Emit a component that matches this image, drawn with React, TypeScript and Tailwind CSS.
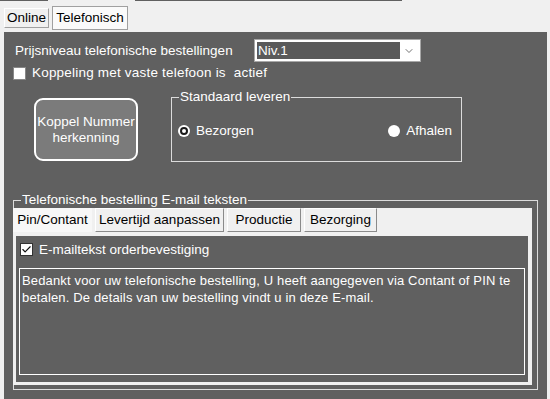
import { Check, ChevronDown } from "lucide-react";

const font = { fontFamily: '"Liberation Sans", Arial, sans-serif' };

const Radio = ({ checked, label }: { checked?: boolean; label: string }) => (
  <div className="flex items-center gap-[6px]">
    <div className="size-[12px] rounded-full bg-white flex items-center justify-center">
      {checked && <div className="size-[8px] rounded-full border-2 border-[#1a1a1a]" />}
    </div>
    <span>{label}</span>
  </div>
);

const Checkbox = ({ checked }: { checked?: boolean }) => (
  <div className="size-[13px] bg-white border border-[#333] flex items-center justify-center">
    {checked && <Check className="size-[11px] text-[#111]" strokeWidth={2.5} />}
  </div>
);

const emailTabs = [
  { label: "Levertijd aanpassen", w: "w-[129px]" },
  { label: "Productie", w: "w-[74px]" },
  { label: "Bezorging", w: "w-[73px]" },
];

export default function App() {
  return (
    <div
      className="w-[550px] h-[399px] bg-[#f0f0f0] flex flex-col overflow-hidden text-[13.5px] leading-[16px]"
      style={font}
    >
      {/* top edge remnant */}
      <div className="flex h-px">
        <div className="w-[48px] bg-[#606060]" />
        <div className="w-[87px]" />
        <div className="w-[267px] bg-[#606060]" />
      </div>

      {/* main tabs */}
      <div className="flex h-[31px] pl-[4px] gap-[3px] text-black">
        <div className="mt-[7px] w-[45px] h-[20px] flex items-center justify-center bg-[#f0f0f0] border border-t-white border-l-white border-r-[#a0a0a0] border-b-[#a0a0a0]">
          Online
        </div>
        <div className="mt-[5px] w-[76px] h-[24px] flex items-center justify-center bg-[#fafafa] border border-[#a0a0a0]">
          Telefonisch
        </div>
      </div>

      {/* dark panel */}
      <div className="ml-[4px] w-[543px] flex-1 bg-[#606060] text-white flex flex-col">
        <div className="flex items-center pl-[11px] mt-[7px] h-[23px]">
          <span className="w-[239px]">Prijsniveau telefonische bestellingen</span>
          <div className="w-[167px] h-[23px] border border-[#a8a8a8] bg-white p-[2px] flex">
            <div className="flex-1 bg-[#5a5a5a] flex items-center pl-[1px]">Niv.1</div>
            <div className="w-[18px] flex items-center justify-center">
              <ChevronDown className="size-[12px] text-[#444]" strokeWidth={1.5} />
            </div>
          </div>
        </div>

        <div className="flex items-center gap-[6px] pl-[9px] mt-[4px] h-[14px]">
          <div className="size-[13px] bg-white border border-[#888]" />
          <span className="whitespace-pre tracking-[0.2px]">Koppeling met vaste telefoon is  actief</span>
        </div>

        <div className="flex items-start mt-[9px]">
          <button className="ml-[30px] mt-[9px] w-[104px] h-[63px] rounded-[9px] border-2 border-white bg-[#7b7b7b] text-white text-center leading-[16px]">
            Koppel Nummer
            <br />
            herkenning
          </button>
          <fieldset className="ml-[33px] w-[291px] h-[73px] border border-[#dcdcdc]">
            <legend className="ml-[7px] px-px">Standaard leveren</legend>
            <div className="flex items-center mt-[18px] pl-[6px] pr-[9px] justify-between">
              <Radio checked label="Bezorgen" />
              <Radio label="Afhalen" />
            </div>
          </fieldset>
        </div>

        <fieldset className="ml-[9px] mt-[30px] w-[525px] h-[198px] border border-[#dcdcdc]">
          <legend className="ml-[7px] px-px">Telefonische bestelling E-mail teksten</legend>
          <div className="-ml-px w-[519px] h-[177px] bg-[#f0f0f0] flex flex-col text-black">
            <div className="flex h-[24px] gap-[3px]">
              <div className="w-[79px] h-[24px] bg-[#f7f7f7] flex items-center justify-center">
                Pin/Contant
              </div>
              {emailTabs.map((t) => (
                <div
                  key={t.label}
                  className={`${t.w} h-[24px] flex items-center justify-center bg-[#f0f0f0] border border-t-white border-l-white border-r-[#8a8a8a] border-b-[#8a8a8a]`}
                >
                  {t.label}
                </div>
              ))}
            </div>
            <div className="mt-[4px] ml-[3px] w-[512px] h-[146px] bg-[#606060] text-white flex flex-col">
              <div className="flex items-center gap-[6px] pl-[4px] mt-[7px] h-[13px]">
                <Checkbox checked />
                <span>E-mailtekst orderbevestiging</span>
              </div>
              <div className="ml-[3px] mt-[12px] w-[506px] h-[107px] border border-white px-[2px] pt-[3px] text-[13px] tracking-[0.15px] leading-[17px]">
                Bedankt voor uw telefonische bestelling, U heeft aangegeven via Contant of PIN te
                betalen. De details van uw bestelling vindt u in deze E-mail.
              </div>
            </div>
          </div>
        </fieldset>
      </div>
    </div>
  );
}
